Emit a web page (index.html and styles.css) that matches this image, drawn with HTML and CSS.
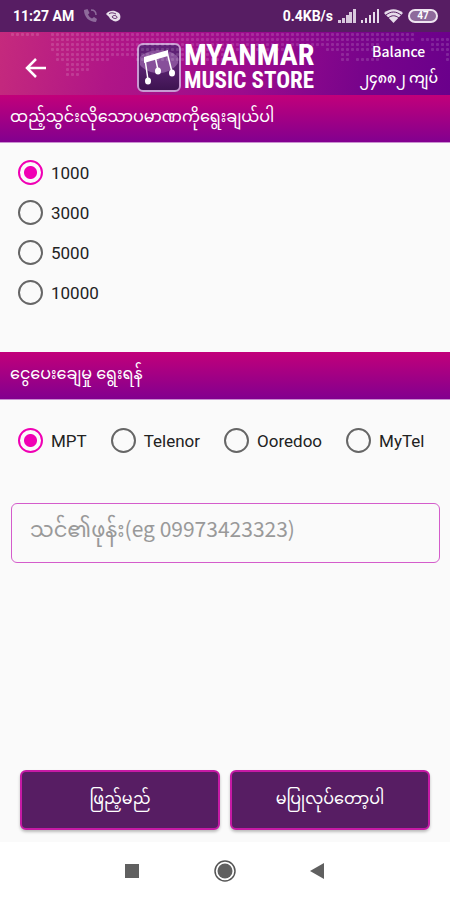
FILE: index.html
```html
<!DOCTYPE html>
<html lang="my">
<head>
<meta charset="utf-8">
<meta name="viewport" content="width=device-width, initial-scale=1">
<title>Myanmar Music Store</title>
<link rel="stylesheet" href="styles.css">
</head>
<body>
<div class="status">
  <span class="clock">11:27 AM</span>
  <svg class="status-call" width="16" height="16" viewBox="0 0 16 16" fill="none" stroke="#8e6a9b" stroke-width="2"><path d="M2 2c0 7 5 12 12 12l1-3-3-2-2 1.500c-2-1-3-2-4-4L7.500 5 5.500 1z" fill="#8e6a9b" stroke="none"/><path d="M9 2c3 0 5 2 5 5" stroke-width="1.500"/></svg>
  <svg width="15" height="12" viewBox="0 0 15 12"><path d="M0 4C3 0 8 0 11 2c3 1 4 4 3 7-2 3-6 3-8 1C3 9 4 7 2 6z" fill="#e8dfeb"/><path d="M3 4c2-2 5-1 7 0M6 7c1-2 4-2 5 0 0 2-3 2-5 0" fill="none" stroke="#571d63" stroke-width="1"/></svg>
  <span class="rate">0.4KB/s</span>
  <svg width="18" height="14" viewBox="0 0 18 14" fill="#d9c9de"><path d="M0 11h3v3H0zM4 9h3v5H4zM8 6h3v8H8zM11 3h3v11h-3zM15 0h3v14h-3z"/></svg>
  <svg width="18" height="14" viewBox="0 0 18 14" fill="#e6dcea"><path d="M0 11h2v3H0zM4 9h2v5H4zM8 6h2v8H8zM12 3h2v11h-2zM16 0h2v14h-2z"/></svg>
  <svg width="19" height="14" viewBox="0 0 19 14"><path d="M0 4C6-1 13-1 19 4L9.500 14z" fill="#e6dcea"/><path d="M2 6c5-4 10-4 15 0M4 9c4-3 7-3 11 0" fill="none" stroke="#571d63" stroke-width="1"/></svg>
  <span class="battery">47</span>
</div>
<header class="header">
  <svg class="map" width="450" height="64" viewBox="0 0 450 64" aria-hidden="true">
    <defs><pattern id="dots" width="5" height="5" patternUnits="userSpaceOnUse"><rect x="1" y="1" width="3" height="3" rx="1" fill="#fff" fill-opacity=".14"/></pattern></defs>
    <path fill="url(#dots)" d="M10 0h30v5H10zM50 0h260v15h-20v5h-65v10h-90v-5h-25v5H90v10H80v5H65V30H55V20H50zM305 0h110v10h-35v10h-30v10h-10v-10h-15V15h-20zM420 5h30v25h-5V20h-15v-10h-10zM355 25h25v5h-25z"/>
  </svg>
  <button class="back" type="button" aria-label="Back"><svg width="22" height="20" viewBox="0 0 22 20" fill="none" stroke="#fff" stroke-width="2.500"><path d="M21 10H3M11 1L2 10l9 9"/></svg></button>
  <div class="logo">
    <svg width="44" height="49" viewBox="0 0 44 49">
      <defs><linearGradient id="tile" x1="0" y1="0" x2="0" y2="1"><stop offset="0" stop-color="#612078"/><stop offset=".55" stop-color="#56206c"/><stop offset="1" stop-color="#3c134f"/></linearGradient></defs>
      <rect x="1" y="1" width="42" height="47" rx="5" fill="url(#tile)" stroke="#c79bd1" stroke-width="2"/>
      <path d="M3 14C10 6 32 4 41 14v6C34 32 13 34 3 22z" fill="#a671b8" opacity=".6"/>
      <g stroke="#fff" fill="#fff"><path d="M7 14l24-7v6L7 20z" stroke="none"/><path d="M8 16l3 21M18 13l3 14M30 9l5 20" fill="none" stroke-width="1.500"/><ellipse cx="11" cy="38" rx="3" ry="3.500" stroke="none"/><ellipse cx="21" cy="28" rx="3" ry="3.500" stroke="none"/><ellipse cx="35" cy="30" rx="3" ry="3.500" stroke="none"/></g>
    </svg>
    <div class="brand"><span class="brand-top">MYANMAR</span><span class="brand-bottom">MUSIC STORE</span></div>
  </div>
  <div class="balance"><span>Balance</span><span>၂၄၈၈၂ ကျပ်</span></div>
</header>
<main class="main">
  <h2 class="bar" id="amount">ထည့်သွင်းလိုသောပမာဏကိုရွေးချယ်ပါ</h2>
  <div class="amounts" role="radiogroup" aria-labelledby="amount">
    <label class="option"><input type="radio" name="amount" checked>1000</label>
    <label class="option"><input type="radio" name="amount">3000</label>
    <label class="option"><input type="radio" name="amount">5000</label>
    <label class="option"><input type="radio" name="amount">10000</label>
  </div>
  <h2 class="bar" id="operator">ငွေပေးချေမှု ရွေးရန်</h2>
  <div class="operators" role="radiogroup" aria-labelledby="operator">
    <label class="option"><input type="radio" name="operator" checked>MPT</label>
    <label class="option"><input type="radio" name="operator">Telenor</label>
    <label class="option"><input type="radio" name="operator">Ooredoo</label>
    <label class="option"><input type="radio" name="operator">MyTel</label>
  </div>
  <input class="phone" type="tel" aria-label="သင်၏ဖုန်း" placeholder="သင်၏ဖုန်း(eg 09973423323)">
  <div class="actions">
    <button class="action" type="button">ဖြည့်မည်</button>
    <button class="action" type="button">မပြုလုပ်တော့ပါ</button>
  </div>
</main>
<nav class="nav">
  <button type="button" aria-label="Recent apps"><svg width="24" height="24" viewBox="0 0 24 24"><path d="M5 5h14v14H5z" fill="#606060"/></svg></button>
  <button type="button" aria-label="Home"><svg width="24" height="24" viewBox="0 0 24 24"><circle cx="12" cy="12" r="10" fill="none" stroke="#555" stroke-width="1.500"/><circle cx="12" cy="12" r="7.500" fill="#606060"/></svg></button>
  <button type="button" aria-label="Back"><svg width="24" height="24" viewBox="0 0 24 24"><path d="M18 4v16L4 12z" fill="#606060"/></svg></button>
</nav>
</body>
</html>
```
FILE: styles.css
```css
* { box-sizing: border-box; }
body {
  margin: 0;
  min-height: 100vh;
  display: flex;
  flex-direction: column;
  background: #fafafa;
  color: #222;
  font-family: Roboto, "Noto Sans", "Noto Sans Myanmar", Padauk, sans-serif;
}
button { border: 0; padding: 0; background: none; font: inherit; }
svg { display: block; flex: none; }

.status {
  display: flex;
  align-items: center;
  gap: 5px;
  height: 32px;
  padding: 0 12px 0 13px;
  background: #571d63;
  color: #fff;
  font-size: 14px;
  font-weight: 700;
}
.status-call { margin: 0 3px; }
.rate { margin-left: auto; }
.battery {
  width: 30px;
  height: 14px;
  border: 2px solid #eee5f0;
  border-radius: 7px;
  background: #8e6a9b;
  font-size: 10px;
  line-height: 10px;
  text-align: center;
}

.header {
  position: relative;
  display: flex;
  align-items: center;
  height: 63px;
  padding-right: 12px;
  background: linear-gradient(100deg, #c52a7d 0%, #b01587 25%, #9b0b8d 55%, #78048b 80%, #6a008b 100%);
  color: #fff;
}
.map { position: absolute; top: 0; left: 0; }
.back { width: 48px; padding: 8px 0 0 25px; }
.logo { display: flex; align-items: center; gap: 3px; margin: 7px auto 0 89px; }
.brand {
  display: flex;
  flex-direction: column;
  font-family: "Roboto Condensed", "Open Sans Condensed", "Liberation Sans Narrow", "Liberation Sans", sans-serif;
  font-weight: 700;
  white-space: nowrap;
}
.brand-top { font-size: 30px; line-height: 28px; }
.brand-bottom { font-size: 23px; line-height: 24px; }
.balance {
  display: flex;
  flex-direction: column;
  align-items: center;
  font-family: "Noto Sans CJK SC", "Noto Sans Myanmar", Padauk, sans-serif;
  font-size: 14px;
  font-weight: 500;
  line-height: 26px;
  white-space: nowrap;
}

.main { flex: 1; display: flex; flex-direction: column; }
.bar {
  margin: 0;
  height: 48px;
  padding: 0 10px;
  background: linear-gradient(#c2007a, #82008f);
  border-bottom: 1px solid #c98fd0;
  color: #fff;
  font-size: 16px;
  font-weight: 400;
  line-height: 44px;
  white-space: nowrap;
}
.amounts { display: grid; gap: 15px; padding: 17px 18px 47px; }
.operators { display: flex; gap: 24px; padding: 28px 18px; }
.option {
  display: flex;
  align-items: center;
  gap: 8px;
  height: 25px;
  font-size: 17px;
  white-space: nowrap;
}
.option input {
  appearance: none;
  flex: none;
  width: 25px;
  height: 25px;
  margin: 0;
  border: 2px solid #666;
  border-radius: 50%;
}
.option input:checked {
  border-color: #f000b4;
  background: radial-gradient(circle, #f000b4 6px, transparent 7px);
}
.phone {
  height: 60px;
  margin: 22px 10px 0 11px;
  padding: 0 18px 10px;
  border: 1px solid #d45ccb;
  border-radius: 6px;
  background: transparent;
  font-family: "Noto Sans CJK SC", "Noto Sans Myanmar", Padauk, sans-serif;
  font-size: 21px;
}
.phone::placeholder { color: #999; opacity: 1; }
.actions {
  display: grid;
  grid-template-columns: 1fr 1fr;
  gap: 10px;
  margin-top: auto;
  padding: 0 20px 12px;
}
.action {
  height: 60px;
  border: 2px solid #c61aa5;
  border-radius: 6px;
  background: #571d63;
  box-shadow: 0 2px 3px rgba(0, 0, 0, .25);
  color: #fff;
  font-size: 16px;
}
.nav {
  display: flex;
  justify-content: center;
  align-items: center;
  gap: 69px;
  height: 58px;
  background: #fff;
}
```
